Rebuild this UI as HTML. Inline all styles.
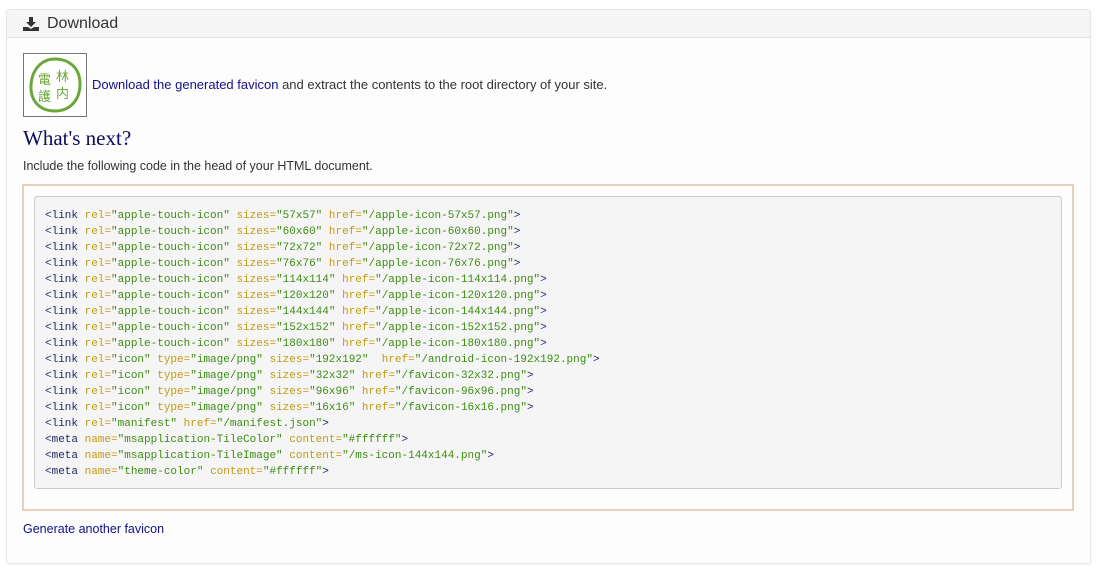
<!DOCTYPE html>
<html><head><meta charset="utf-8"><style>
body{margin:0;background:#fff;font-family:"Liberation Sans",Arial,sans-serif;width:1100px;height:571px;overflow:hidden}
.panel{position:absolute;left:6px;top:9px;width:1083px;height:553px;border:1px solid #e6e6e6;border-radius:3px;background:#fdfdfd;box-shadow:0 1px 2px rgba(0,0,0,.05)}
.hd{height:27px;background:#f5f5f5;border-bottom:1px solid #e3e3e3;position:relative}
.hd span{position:absolute;left:40px;top:5px;font-size:16px;color:#333}
.hd svg{position:absolute;left:16px;top:7px}
.ic{position:absolute;left:16px;top:43px;width:62px;height:62px;border:1px solid #777;background:#fff}
.dl{position:absolute;left:85px;top:67px;font-size:13px;color:#333}
a{text-decoration:none;color:#12108a}
h3{position:absolute;left:16px;top:116px;margin:0;font-family:"Liberation Serif",Georgia,serif;font-weight:normal;font-size:21px;color:#0c0c5c}
.inc{position:absolute;left:16px;top:149px;font-size:12.5px;color:#333}
.box{position:absolute;left:15px;top:174px;width:1048px;height:323px;border:2px solid #e6cfbd;background:#fdfdfd}
.pre{position:absolute;left:10px;top:10px;width:1026px;height:291px;border:1px solid #ccc;border-radius:3px;background:#f5f5f5}
pre{margin:0;position:absolute;left:10px;top:11px;font-family:"Liberation Mono",monospace;font-size:11px;line-height:16px;color:#1c2a6a}
.a{color:#c29a14}.v{color:#3c8c12}
.gen{position:absolute;left:16px;top:512px;font-size:12.5px}
</style></head><body>
<div class="panel">
<div class="hd"><svg width="16" height="14" viewBox="0 0 16 14"><path d="M6 0h4v5h3l-5 5-5-5h3z" fill="#333"/><path d="M0 10h5l3 2 3-2h5v4H0z" fill="#333"/></svg><span>Download</span></div>
<div class="ic"><svg width="62" height="62" viewBox="0 0 62 62"><path d="M31 5c12 0 25 7 25 25 0 16-10 27-25 27S6 47 7 31 18 5 31 5z" fill="none" stroke="#6aa83a" stroke-width="3"/><g fill="#6aa83a" font-family="Noto Sans CJK SC,sans-serif" font-size="13"><text x="14" y="30">電</text><text x="32" y="27">林</text><text x="14" y="47">護</text><text x="32" y="44">内</text></g></svg></div>
<div class="dl"><a>Download the generated favicon</a> and extract the contents to the root directory of your site.</div>
<h3>What's next?</h3>
<div class="inc">Include the following code in the head of your HTML document.</div>
<div class="box"><div class="pre"><pre>&lt;link <span class="a">rel=</span><span class="v">"apple-touch-icon"</span> <span class="a">sizes=</span><span class="v">"57x57"</span> <span class="a">href=</span><span class="v">"/apple-icon-57x57.png"</span>&gt;
&lt;link <span class="a">rel=</span><span class="v">"apple-touch-icon"</span> <span class="a">sizes=</span><span class="v">"60x60"</span> <span class="a">href=</span><span class="v">"/apple-icon-60x60.png"</span>&gt;
&lt;link <span class="a">rel=</span><span class="v">"apple-touch-icon"</span> <span class="a">sizes=</span><span class="v">"72x72"</span> <span class="a">href=</span><span class="v">"/apple-icon-72x72.png"</span>&gt;
&lt;link <span class="a">rel=</span><span class="v">"apple-touch-icon"</span> <span class="a">sizes=</span><span class="v">"76x76"</span> <span class="a">href=</span><span class="v">"/apple-icon-76x76.png"</span>&gt;
&lt;link <span class="a">rel=</span><span class="v">"apple-touch-icon"</span> <span class="a">sizes=</span><span class="v">"114x114"</span> <span class="a">href=</span><span class="v">"/apple-icon-114x114.png"</span>&gt;
&lt;link <span class="a">rel=</span><span class="v">"apple-touch-icon"</span> <span class="a">sizes=</span><span class="v">"120x120"</span> <span class="a">href=</span><span class="v">"/apple-icon-120x120.png"</span>&gt;
&lt;link <span class="a">rel=</span><span class="v">"apple-touch-icon"</span> <span class="a">sizes=</span><span class="v">"144x144"</span> <span class="a">href=</span><span class="v">"/apple-icon-144x144.png"</span>&gt;
&lt;link <span class="a">rel=</span><span class="v">"apple-touch-icon"</span> <span class="a">sizes=</span><span class="v">"152x152"</span> <span class="a">href=</span><span class="v">"/apple-icon-152x152.png"</span>&gt;
&lt;link <span class="a">rel=</span><span class="v">"apple-touch-icon"</span> <span class="a">sizes=</span><span class="v">"180x180"</span> <span class="a">href=</span><span class="v">"/apple-icon-180x180.png"</span>&gt;
&lt;link <span class="a">rel=</span><span class="v">"icon"</span> <span class="a">type=</span><span class="v">"image/png"</span> <span class="a">sizes=</span><span class="v">"192x192"</span>  <span class="a">href=</span><span class="v">"/android-icon-192x192.png"</span>&gt;
&lt;link <span class="a">rel=</span><span class="v">"icon"</span> <span class="a">type=</span><span class="v">"image/png"</span> <span class="a">sizes=</span><span class="v">"32x32"</span> <span class="a">href=</span><span class="v">"/favicon-32x32.png"</span>&gt;
&lt;link <span class="a">rel=</span><span class="v">"icon"</span> <span class="a">type=</span><span class="v">"image/png"</span> <span class="a">sizes=</span><span class="v">"96x96"</span> <span class="a">href=</span><span class="v">"/favicon-96x96.png"</span>&gt;
&lt;link <span class="a">rel=</span><span class="v">"icon"</span> <span class="a">type=</span><span class="v">"image/png"</span> <span class="a">sizes=</span><span class="v">"16x16"</span> <span class="a">href=</span><span class="v">"/favicon-16x16.png"</span>&gt;
&lt;link <span class="a">rel=</span><span class="v">"manifest"</span> <span class="a">href=</span><span class="v">"/manifest.json"</span>&gt;
&lt;meta <span class="a">name=</span><span class="v">"msapplication-TileColor"</span> <span class="a">content=</span><span class="v">"#ffffff"</span>&gt;
&lt;meta <span class="a">name=</span><span class="v">"msapplication-TileImage"</span> <span class="a">content=</span><span class="v">"/ms-icon-144x144.png"</span>&gt;
&lt;meta <span class="a">name=</span><span class="v">"theme-color"</span> <span class="a">content=</span><span class="v">"#ffffff"</span>&gt;</pre></div></div>
<div class="gen"><a>Generate another favicon</a></div>
</div>
</body></html>
